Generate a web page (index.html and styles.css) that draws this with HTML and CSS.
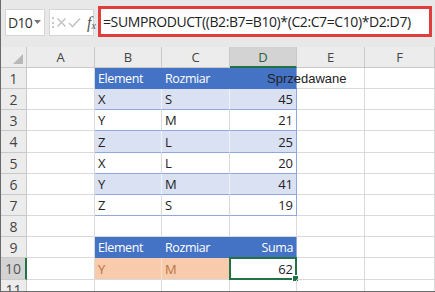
FILE: index.html
```html
<!DOCTYPE html>
<html>
<head>
<meta charset="utf-8">
<link rel="stylesheet" href="styles.css">
</head>
<body>
<div class="app">
  <div class="fbar">
    <div class="namebox"><span class="nb-text">D10</span><svg class="nb-arrow" width="7" height="4" viewBox="0 0 7 4"><path d="M0 0H7L3.5 4Z" fill="#777"/></svg></div>
    <div class="fxbox">
      <span class="grip"></span>
      <svg class="ico" width="11" height="11" viewBox="0 0 11 11"><path d="M1.5 1.5L9.5 9.5M9.5 1.5L1.5 9.5" stroke="#c4c4c4" stroke-width="1.6" fill="none"/></svg>
      <svg class="ico" width="13" height="11" viewBox="0 0 13 11"><path d="M1 6L4.5 9.5L12 1.5" stroke="#c4c4c4" stroke-width="1.6" fill="none"/></svg>
      <span class="fx">f<sub>x</sub></span>
    </div>
    <div class="formula">=SUMPRODUCT((B2:B7=B10)*(C2:C7=C10)*D2:D7)</div>
  </div>
  <div class="grid">
    <div class="corner"><svg width="10" height="10" viewBox="0 0 10 10"><path d="M10 0V10H0Z" fill="#b8b8b8"/></svg></div>
    <div class="ch">A</div><div class="ch">B</div><div class="ch">C</div><div class="ch sel">D</div><div class="ch">E</div><div class="ch">F</div>

    <div class="rh">1</div><div class="c"></div><div class="c th">Element</div><div class="c th">Rozmiar</div><div class="c th thr"><span class="over">Sprzedawane</span></div><div class="c"></div><div class="c"></div>
    <div class="rh">2</div><div class="c"></div><div class="c band tl">X</div><div class="c band">S</div><div class="c band tr num">45</div><div class="c"></div><div class="c"></div>
    <div class="rh">3</div><div class="c"></div><div class="c wb tl">Y</div><div class="c wb">M</div><div class="c wb tr num">21</div><div class="c"></div><div class="c"></div>
    <div class="rh">4</div><div class="c"></div><div class="c band tl">Z</div><div class="c band">L</div><div class="c band tr num">25</div><div class="c"></div><div class="c"></div>
    <div class="rh">5</div><div class="c"></div><div class="c wb tl">X</div><div class="c wb">L</div><div class="c wb tr num">20</div><div class="c"></div><div class="c"></div>
    <div class="rh">6</div><div class="c"></div><div class="c band tl">Y</div><div class="c band">M</div><div class="c band tr num">41</div><div class="c"></div><div class="c"></div>
    <div class="rh">7</div><div class="c"></div><div class="c wb tl">Z</div><div class="c wb">S</div><div class="c wb tr num">19</div><div class="c"></div><div class="c"></div>
    <div class="rh">8</div><div class="c"></div><div class="c"></div><div class="c"></div><div class="c"></div><div class="c"></div><div class="c"></div>
    <div class="rh">9</div><div class="c"></div><div class="c th">Element</div><div class="c th">Rozmiar</div><div class="c th thr num">Suma</div><div class="c"></div><div class="c"></div>
    <div class="rh rsel">10</div><div class="c"></div><div class="c crit">Y</div><div class="c crit">M</div><div class="c active num">62<span class="handle"></span></div><div class="c"></div><div class="c"></div>
    <div class="rh">11</div><div class="c"></div><div class="c"></div><div class="c"></div><div class="c"></div><div class="c"></div><div class="c"></div>
  </div>
</div>
</body>
</html>
```
FILE: styles.css
```css
html, body {
  margin: 0;
  padding: 0;
  background: #fff;
}
.app {
  width: 435px;
  height: 292px;
  box-sizing: border-box;
  border-left: 1px solid #6a6a6a;
  border-bottom: 1px solid #6a6a6a;
  background: #e8e8e8;
  overflow: hidden;
  display: flex;
  flex-direction: column;
}
.fbar {
  height: 47px;
  flex: none;
  display: flex;
  align-items: flex-start;
  padding: 9px 3px 0 4px;
  box-sizing: border-box;
  gap: 4px;
}
.namebox {
  width: 40px;
  height: 27px;
  box-sizing: border-box;
  background: #fff;
  border: 1px solid #d6d6d6;
  display: flex;
  align-items: center;
  padding-left: 2px;
  gap: 2px;
  font-family: "Open Sans", sans-serif;
  font-size: 14px;
  letter-spacing: -0.7px;
  color: #333;
}
.nb-arrow { margin-top: -1px; flex: none; }
.fxbox {
  width: 45px;
  height: 27px;
  box-sizing: border-box;
  background: #fff;
  border: 1px solid #d6d6d6;
  display: flex;
  align-items: center;
  padding-left: 2px;
  gap: 1px;
}
.grip {
  width: 2px;
  height: 11px;
  border-left: 2px dotted #c8c8c8;
  margin-right: 1px;
}
.ico { flex: none; }
.fx {
  font-family: "Liberation Serif", serif;
  font-style: italic;
  font-size: 16px;
  color: #555;
  margin-left: 5px;
  line-height: 1;
}
.fx sub {
  font-size: 10px;
  vertical-align: -1px;
}
.formula {
  flex: 1;
  height: 31px;
  margin-top: -3px;
  box-sizing: border-box;
  background: #fff;
  border: 3px solid #e23d3d;
  display: flex;
  align-items: center;
  padding-left: 2px;
  font-family: "Open Sans", sans-serif;
  font-size: 14px;
  letter-spacing: -0.4px;
  color: #222;
  white-space: nowrap;
  overflow: hidden;
}
.grid {
  flex: 1;
  display: grid;
  grid-template-columns: 26px 68px 67px 68px 67px 68px 1fr;
  grid-template-rows: 21px 21px 21px 21px 22px 21px 21px 21px 21px 21px 22px 1fr;
  background: #fff;
  font-family: "Open Sans", sans-serif;
  font-size: 13px;
  color: #222;
}
.grid > div {
  box-sizing: border-box;
  border-right: 1px solid #dadada;
  border-bottom: 1px solid #dadada;
  display: flex;
  align-items: center;
  white-space: nowrap;
  position: relative;
}
.corner {
  background: #ececec;
  justify-content: flex-end;
  align-items: flex-end !important;
  padding: 0 3px 3px 0;
  border-color: #c9c9c9 !important;
}
.ch {
  background: #ececec;
  justify-content: center;
  color: #444;
  font-size: 13px;
  border-color: #c9c9c9 !important;
}
.ch.sel {
  background: #d3d3d3;
  border-bottom: 2px solid #217346 !important;
  color: #2b5f3f;
}
.rh {
  background: #ececec;
  justify-content: center;
  color: #444;
  font-size: 14px;
  border-color: #c9c9c9 !important;
}
.rh.rsel {
  background: #d3d3d3;
  border-right: 2px solid #217346 !important;
  color: #555;
}
.c { padding: 0 3px; }
.num { justify-content: flex-end; }
.th {
  background: #4472c4;
  color: #fff;
  font-size: 12.5px;
  letter-spacing: -0.4px;
  border-color: #4472c4 !important;
}
.thr { border-right-color: #8ea9db !important; }
.over {
  font-family: "Liberation Sans", sans-serif;
  font-size: 13px;
  letter-spacing: 0;
  color: #222;
  margin-left: 34px;
  overflow: visible;
}
.band {
  background: #d9e1f2;
  border-bottom-color: #8ea9db !important;
  border-right-color: #eef2fa !important;
}
.wb {
  border-bottom-color: #8ea9db !important;
}
.tr { border-right-color: #8ea9db !important; }
.crit {
  background: #f8cbad;
  color: #b7743f;
  border-right-color: #fbe0cd !important;
}
.active {
  border: 2px solid #217346 !important;
  margin: -1px 0 0 -1px;
  padding-right: 2px;
}
.handle {
  position: absolute;
  right: -4px;
  bottom: -4px;
  width: 5px;
  height: 5px;
  background: #217346;
  border: 1px solid #fff;
}
```
